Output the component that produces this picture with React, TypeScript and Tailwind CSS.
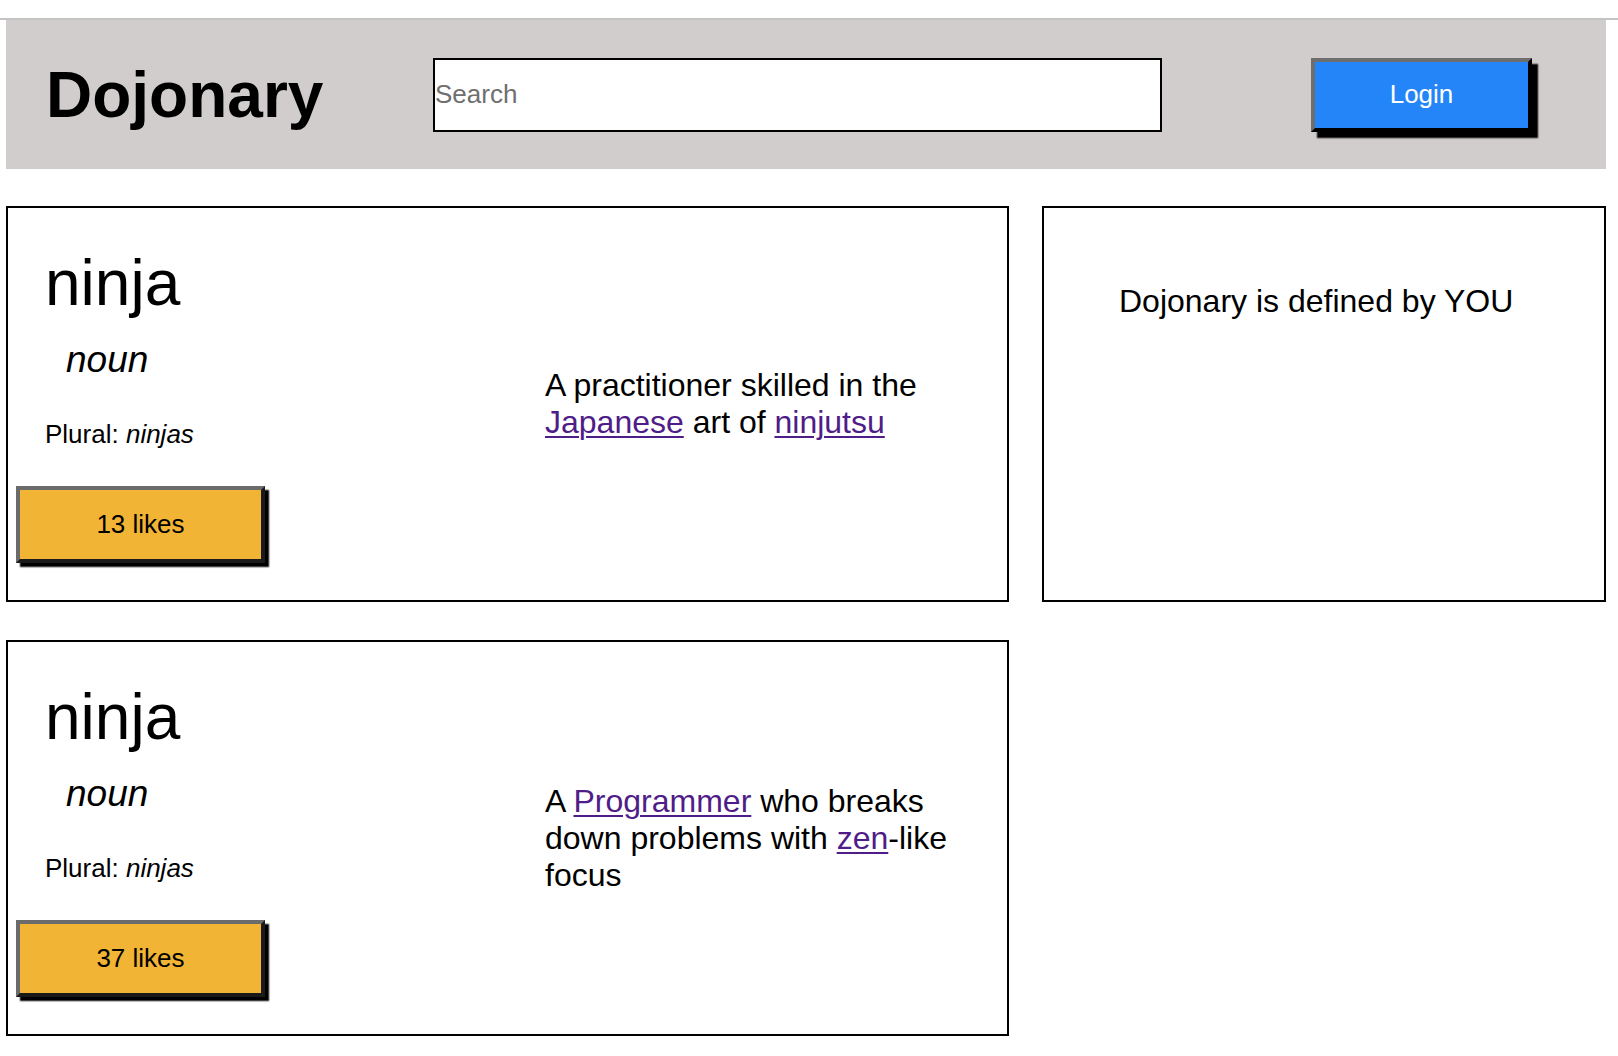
import type { JSX, ReactNode } from "react"

interface Entry {
  word: string
  partOfSpeech: string
  plural: string
  likes: number
  definition: ReactNode
}

const linkClass = "text-[#4f1d88] underline decoration-2 underline-offset-[3px]"

const entries: Entry[] = [
  {
    word: "ninja",
    partOfSpeech: "noun",
    plural: "ninjas",
    likes: 13,
    definition: (
      <>
        A practitioner skilled in the <a href="#" className={linkClass}>Japanese</a> art of{" "}
        <a href="#" className={linkClass}>ninjutsu</a>
      </>
    ),
  },
  {
    word: "ninja",
    partOfSpeech: "noun",
    plural: "ninjas",
    likes: 37,
    definition: (
      <>
        A <a href="#" className={linkClass}>Programmer</a> who breaks down problems with{" "}
        <a href="#" className={linkClass}>zen</a>-like focus
      </>
    ),
  },
]

function Header(): JSX.Element {
  return (
    <header className="ml-[6px] flex h-[149px] w-[1600px] items-center bg-[#d1cdcc] pl-[40px]">
      <h1 className="w-[387px] shrink-0 text-[64px] font-bold leading-[74px]">Dojonary</h1>
      <input
        type="text"
        placeholder="Search"
        className="h-[74px] w-[729px] shrink-0 border-2 border-black bg-white px-0 text-[26px] outline-none placeholder:text-[#6f6f6f]"
      />
      <button
        type="button"
        className="ml-[149px] h-[74px] w-[221px] shrink-0 border-4 border-t-[#6e6e6e] border-l-[#6e6e6e] border-r-black border-b-black bg-[#2385f7] text-[26px] text-white shadow-[6px_6px_1.5px_#000]"
      >
        Login
      </button>
    </header>
  )
}

function EntryCard({ entry }: { entry: Entry }): JSX.Element {
  return (
    <article className="flex border-2 border-black">
      <div className="flex w-[537px] shrink-0 flex-col items-start">
        <h2 className="ml-[37px] mt-[38px] text-[64px] leading-[74px]">{entry.word}</h2>
        <p className="ml-[58px] mt-[19px] text-[37px] italic leading-[42px]">{entry.partOfSpeech}</p>
        <p className="ml-[37px] mt-[38px] text-[26px] leading-[30px]">
          Plural: <em>{entry.plural}</em>
        </p>
        <button
          type="button"
          className="mb-[37px] ml-[8px] mt-[37px] h-[77px] w-[249px] border-4 border-t-[#6b6b6b] border-l-[#6b6b6b] border-r-[#1a1a1a] border-b-[#1a1a1a] bg-[#f1b434] text-[26px] text-black shadow-[4px_4px_1.5px_#000]"
        >
          {entry.likes} likes
        </button>
      </div>
      <p className="w-[430px] self-center text-[32px] leading-[37px]">{entry.definition}</p>
    </article>
  )
}

export default function App(): JSX.Element {
  return (
    <div className="min-h-screen bg-white pb-[20px] font-['Liberation_Sans',Arial,sans-serif] text-black">
      <div className="mt-[18px] h-[2px] w-full bg-[#c4c4c4]" />
      <Header />
      <main className="ml-[6px] mt-[37px] grid w-[1600px] grid-cols-[1003px_564px] gap-x-[33px] gap-y-[38px]">
        <EntryCard entry={entries[0]} />
        <aside className="border-2 border-black pl-[75px] pt-[75px] text-[32px] leading-[37px]">
          Dojonary is defined by YOU
        </aside>
        <EntryCard entry={entries[1]} />
      </main>
    </div>
  )
}
